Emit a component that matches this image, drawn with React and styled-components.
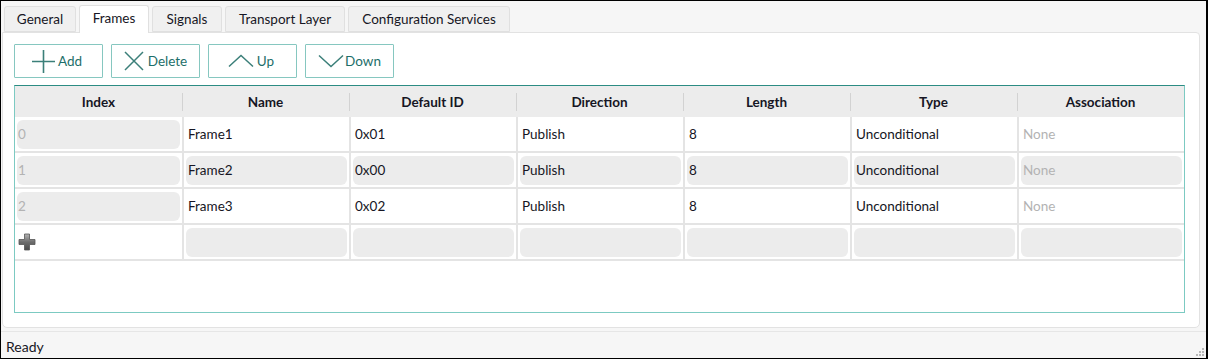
import React from "react";
import styled, { createGlobalStyle } from "styled-components";

const Global = createGlobalStyle`
  * { box-sizing: border-box; }
  html, body { margin: 0; padding: 0; background: #ffffff; }
  body { font-family: "Lato", "Noto Sans", sans-serif; }
`;

const Window = styled.div`
  width: 1208px;
  height: 359px;
  border: 1px solid #000;
  border-right-width: 2px;
  background: #f6f6f6;
  display: flex;
  flex-direction: column;
  font-family: "Lato", "Noto Sans", sans-serif;
  color: #161624;
  position: relative;
`;

const Main = styled.div`
  flex: 0 0 auto;
  display: flex;
  flex-direction: column;
  padding: 3px 6px 0 1px;
`;

const TabBar = styled.div`
  display: flex;
  gap: 3px;
  padding-left: 2px;
  height: 28px;
  align-items: flex-end;
  position: relative;
  z-index: 1;
`;

const Tab = styled.div`
  width: ${(p) => p.$w}px;
  height: ${(p) => (p.$active ? 28 : 26)}px;
  margin-bottom: ${(p) => (p.$active ? -1 : 0)}px;
  background: ${(p) => (p.$active ? "#ffffff" : "#f0f0f0")};
  border: 1px solid #e0e0e0;
  border-bottom: ${(p) => (p.$active ? "none" : "1px solid #e0e0e0")};
  border-radius: 3px 3px 0 0;
  display: flex;
  align-items: center;
  justify-content: center;
  font-size: 13.5px;
  padding-bottom: ${(p) => (p.$active ? 3 : 1)}px;
  color: #161624;
`;

const Pane = styled.div`
  flex: 0 0 auto;
  height: 296px;
  background: #ffffff;
  border: 1px solid #e2e2e2;
  border-radius: 0 4px 5px 5px;
  padding: 11px 14px 14px 11px;
  display: flex;
  flex-direction: column;
  gap: 7px;
`;

const Toolbar = styled.div`
  display: flex;
  gap: 8px;
`;

const Button = styled.button`
  width: 89px;
  height: 34px;
  background: #ffffff;
  border: 1px solid #86c7c0;
  border-radius: 1px;
  display: flex;
  align-items: center;
  justify-content: center;
  gap: ${(p) => p.$gap}px;
  padding: 0 ${(p) => p.$shift}px 0 0;
  font-family: inherit;
  font-size: 13.5px;
  color: #1d6e69;
  cursor: pointer;
`;

const Table = styled.div`
  flex: 1;
  border: 1px solid #7ccac2;
  border-top-color: #2c8c83;
  display: flex;
  flex-direction: column;
`;

const HeaderRow = styled.div`
  display: grid;
  grid-template-columns: repeat(7, 1fr);
  height: 31px;
  background: #ececec;
`;

const HeaderCell = styled.div`
  display: flex;
  align-items: center;
  justify-content: center;
  font-weight: 700;
  font-size: 13.5px;
  position: relative;
  &:not(:first-child)::before {
    content: "";
    position: absolute;
    left: 0;
    top: 7px;
    bottom: 6px;
    width: 1px;
    background: #d2d2d2;
  }
`;

const Row = styled.div`
  display: grid;
  grid-template-columns: repeat(7, 1fr);
  height: 36px;
  border-bottom: 2px solid #e4e4e4;
`;

const Cell = styled.div`
  padding: 3px 2px 2px 2px;
  display: flex;
  &:not(:first-child) {
    border-left: 2px solid #e4e4e4;
    padding-left: 2px;
  }
`;

const CellBox = styled.div`
  flex: 1;
  border-radius: 6px;
  background: ${(p) => (p.$filled ? "#ececec" : "transparent")};
  display: flex;
  align-items: center;
  padding-left: ${(p) => (p.$tight ? 1 : 2)}px;
  padding-bottom: 2px;
  font-size: 13.5px;
  color: ${(p) => (p.$muted ? "#b3b3b3" : "#161624")};
`;

const StatusBar = styled.div`
  flex: 1;
  border-top: 1px solid #e6e6e6;
  margin-top: 3px;
  display: flex;
  align-items: center;
  padding: 3px 0 0 5px;
  font-size: 14px;
  background: #f6f6f6;
`;

const Grip = styled.svg`
  position: absolute;
  right: 1px;
  bottom: 1px;
`;

const iconColor = "#3b7f79";

const PlusIcon = () => (
  <svg width="23" height="23" viewBox="0 0 23 23">
    <path d="M0 11.5H23M11.5 0V23" stroke={iconColor} strokeWidth="1.6" fill="none" />
  </svg>
);
const XIcon = () => (
  <svg width="20" height="20" viewBox="0 0 20 20">
    <path d="M1 1L19 19M19 1L1 19" stroke={iconColor} strokeWidth="1.5" fill="none" />
  </svg>
);
const UpIcon = () => (
  <svg width="26" height="14" viewBox="0 0 26 14">
    <path d="M1 12.5L13 1.5L25 12.5" stroke={iconColor} strokeWidth="1.5" fill="none" />
  </svg>
);
const DownIcon = () => (
  <svg width="26" height="14" viewBox="0 0 26 14">
    <path d="M1 1.5L13 12.5L25 1.5" stroke={iconColor} strokeWidth="1.5" fill="none" />
  </svg>
);

const NewRowPlus = () => (
  <svg width="18" height="18" viewBox="0 0 18 18">
    <defs>
      <linearGradient id="pg" x1="0" y1="0" x2="0" y2="1">
        <stop offset="0" stopColor="#b4b4b4" />
        <stop offset="0.5" stopColor="#6e6e6e" />
        <stop offset="1" stopColor="#4a4a4a" />
      </linearGradient>
    </defs>
    <path
      d="M6.5 1H11.5V6.5H17V11.5H11.5V17H6.5V11.5H1V6.5H6.5Z"
      fill="url(#pg)"
      stroke="#555"
      strokeWidth="0.8"
    />
  </svg>
);

const columns = ["Index", "Name", "Default ID", "Direction", "Length", "Type", "Association"];

const rows = [
  ["0", "Frame1", "0x01", "Publish", "8", "Unconditional", "None"],
  ["1", "Frame2", "0x00", "Publish", "8", "Unconditional", "None"],
  ["2", "Frame3", "0x02", "Publish", "8", "Unconditional", "None"],
];

const tabs = [
  { label: "General", w: 72 },
  { label: "Frames", w: 70, active: true },
  { label: "Signals", w: 70 },
  { label: "Transport Layer", w: 120 },
  { label: "Configuration Services", w: 162 },
];

export default function App() {
  return (
    <>
      <Global />
      <Window>
        <Main>
          <TabBar>
            {tabs.map((t) => (
              <Tab key={t.label} $w={t.w} $active={t.active}>
                {t.label}
              </Tab>
            ))}
          </TabBar>
          <Pane>
            <Toolbar>
              <Button $gap={3} $shift={3}>
                <PlusIcon />
                Add
              </Button>
              <Button $gap={4} $shift={0}>
                <XIcon />
                Delete
              </Button>
              <Button $gap={3} $shift={3}>
                <UpIcon />
                Up
              </Button>
              <Button $gap={1} $shift={0}>
                <DownIcon />
                Down
              </Button>
            </Toolbar>
            <Table>
              <HeaderRow>
                {columns.map((c) => (
                  <HeaderCell key={c}>{c}</HeaderCell>
                ))}
              </HeaderRow>
              {rows.map((r, ri) => (
                <Row key={ri}>
                  {r.map((v, ci) => (
                    <Cell key={ci}>
                      <CellBox
                        $filled={ci === 0 || ri === 1}
                        $muted={ci === 0 || ci === 6}
                        $tight={ci === 0}
                      >
                        {v}
                      </CellBox>
                    </Cell>
                  ))}
                </Row>
              ))}
              <Row>
                {columns.map((c, ci) => (
                  <Cell key={c}>
                    {ci === 0 ? (
                      <CellBox $tight>
                        <NewRowPlus />
                      </CellBox>
                    ) : (
                      <CellBox $filled />
                    )}
                  </Cell>
                ))}
              </Row>
            </Table>
          </Pane>
        </Main>
        <StatusBar>Ready</StatusBar>
        <Grip width="10" height="10" viewBox="0 0 10 10">
          {[
            [8, 2],
            [8, 5],
            [5, 5],
            [8, 8],
            [5, 8],
            [2, 8],
          ].map(([x, y]) => (
            <rect key={`${x}-${y}`} x={x - 1} y={y - 1} width="2" height="2" fill="#b8b8b8" />
          ))}
        </Grip>
      </Window>
    </>
  );
}
